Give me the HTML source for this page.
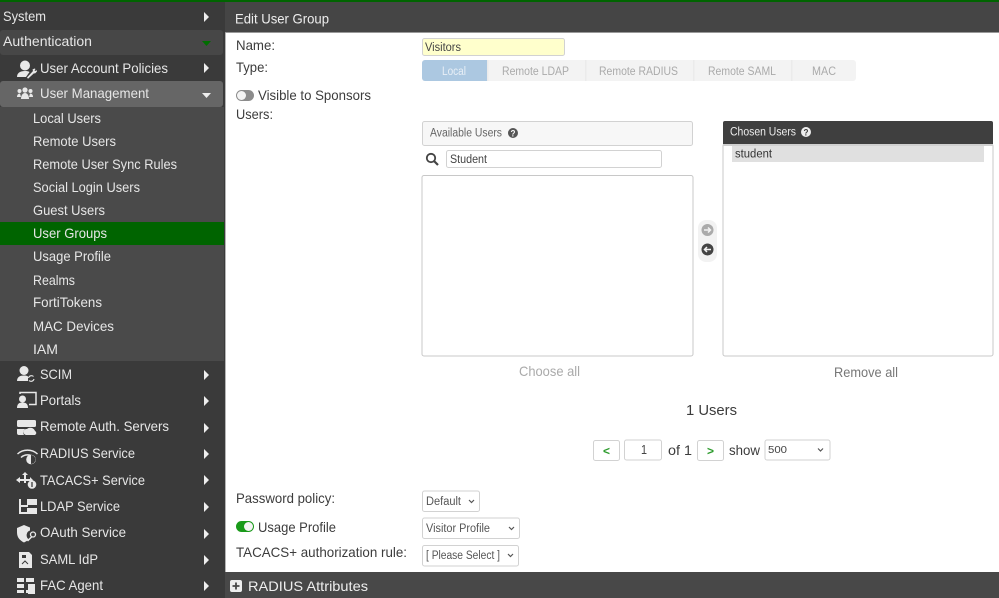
<!DOCTYPE html>
<html><head><meta charset="utf-8"><title>Edit User Group</title>
<style>
html,body{margin:0;padding:0;background:#fff;width:999px;height:598px;overflow:hidden}
svg{display:block}
text{font-family:"Liberation Sans",sans-serif;font-size:14px}
.s text{fill:#e6e6e6}
.f text{fill:#3c3c3c}
.b{fill:#fff;stroke:#d2d2d2;stroke-width:1}
.ic{fill:#e8e8e8}
.ch{fill:none;stroke:#555;stroke-width:1.2}
</style></head><body>
<svg width="999" height="598" viewBox="0 0 999 598" xmlns="http://www.w3.org/2000/svg">
<rect width="999" height="598" fill="#fff"/>
<!-- sidebar -->
<rect y="0" width="225" height="598" fill="#3a3a3a"/>
<rect y="30" width="223" height="25" rx="3" fill="#474747"/>
<rect y="81" width="223" height="26" rx="3" fill="#666"/>
<rect y="107" width="224" height="254" fill="#4a4a4a"/>
<rect y="222" width="224" height="23" fill="#006400"/>
<rect x="225" y="2" width="1" height="596" fill="#b5b5b5"/>
<g class="s">
<text x="3" y="21" textLength="43" lengthAdjust="spacingAndGlyphs">System</text>
<text x="3" y="46" textLength="89" lengthAdjust="spacingAndGlyphs">Authentication</text>
<text x="40" y="73" textLength="128" lengthAdjust="spacingAndGlyphs">User Account Policies</text>
<text x="40" y="98" textLength="109" lengthAdjust="spacingAndGlyphs">User Management</text>
<text x="33" y="123" textLength="68" lengthAdjust="spacingAndGlyphs">Local Users</text>
<text x="33" y="146" textLength="83" lengthAdjust="spacingAndGlyphs">Remote Users</text>
<text x="33" y="169" textLength="144" lengthAdjust="spacingAndGlyphs">Remote User Sync Rules</text>
<text x="33" y="192" textLength="107" lengthAdjust="spacingAndGlyphs">Social Login Users</text>
<text x="33" y="215" textLength="72" lengthAdjust="spacingAndGlyphs">Guest Users</text>
<text x="33" y="238" textLength="74" lengthAdjust="spacingAndGlyphs">User Groups</text>
<text x="33" y="261" textLength="78" lengthAdjust="spacingAndGlyphs">Usage Profile</text>
<text x="33" y="285" textLength="42" lengthAdjust="spacingAndGlyphs">Realms</text>
<text x="33" y="307" textLength="69" lengthAdjust="spacingAndGlyphs">FortiTokens</text>
<text x="33" y="331" textLength="81" lengthAdjust="spacingAndGlyphs">MAC Devices</text>
<text x="33" y="354" textLength="25" lengthAdjust="spacingAndGlyphs">IAM</text>
<text x="40" y="379" textLength="32" lengthAdjust="spacingAndGlyphs">SCIM</text>
<text x="40" y="405" textLength="41" lengthAdjust="spacingAndGlyphs">Portals</text>
<text x="40" y="431" textLength="129" lengthAdjust="spacingAndGlyphs">Remote Auth. Servers</text>
<text x="40" y="458" textLength="95" lengthAdjust="spacingAndGlyphs">RADIUS Service</text>
<text x="40" y="485" textLength="105" lengthAdjust="spacingAndGlyphs">TACACS+ Service</text>
<text x="40" y="511" textLength="80" lengthAdjust="spacingAndGlyphs">LDAP Service</text>
<text x="40" y="537" textLength="86" lengthAdjust="spacingAndGlyphs">OAuth Service</text>
<text x="40" y="564" textLength="58" lengthAdjust="spacingAndGlyphs">SAML IdP</text>
<text x="40" y="590" textLength="63" lengthAdjust="spacingAndGlyphs">FAC Agent</text>
</g>
<!-- arrows -->
<g fill="#eee">
<path d="M204 12v10l5-5z"/><path d="M204 63v10l5-5z"/>
<path d="M204 370v10l5-5z"/><path d="M204 396v10l5-5z"/><path d="M204 423v10l5-5z"/><path d="M204 449v10l5-5z"/><path d="M204 475v10l5-5z"/><path d="M204 502v10l5-5z"/><path d="M204 529v10l5-5z"/><path d="M204 555v10l5-5z"/><path d="M204 581v10l5-5z"/>
<path d="M202 93h9l-4.500 5z"/>
</g>
<path d="M202 41h9l-4.500 5z" fill="#006e00"/>
<!-- sidebar icons -->
<g class="ic">
<!-- user account policies -->
<circle cx="25" cy="65.500" r="5"/><path d="M17 77c0-4 3-6 8-6 2 0 3.500.3 4.500 1l-3.500 5z"/><path d="M27 77.500l6-6.500 -.5-1.500 2-1 1 .5-1 1.500 1 .5 1-1 .5 1.500-2 2-1-.2-6 5.500z"/>
<!-- user management -->
<circle cx="25" cy="90" r="2.600"/><circle cx="19.500" cy="91" r="2"/><circle cx="30.500" cy="91" r="2"/><path d="M21 99c0-4 2-6 4-6s4 2 4 6z"/><path d="M17 97c0-2 1-3.500 3-3.500l1 3.500z"/><path d="M33 97c0-2-1-3.500-3-3.500l-1 3.500z"/>
<!-- SCIM -->
<circle cx="24" cy="370.500" r="4.500"/><path d="M17 381c0-4 3-5.500 7-5.500 2 0 3 .3 4 1v4.500z"/><path d="M28.500 378a3 3 0 0 1 5-1.500M34 379a3 3 0 0 1-5 1.500" fill="none" stroke="#e8e8e8" stroke-width="1.100"/>
<!-- Portals -->
<circle cx="22.500" cy="399" r="3.500"/><path d="M17 408c0-4 2-5.500 5.500-5.500s5.500 1.500 5.500 5.500z"/><path d="M20 394v-1.500h16v12h-7" fill="none" stroke="#e8e8e8" stroke-width="1.500"/>
<!-- Remote auth -->
<rect x="17" y="420" width="19" height="7" rx="1.500"/><path d="M17 429h8c-2 2-2 4-1 6h-5a2 2 0 0 1-2-2z"/><path d="M26 435a3 3 0 0 1 1-6 5 5 0 0 1 8 2 2.200 2.200 0 0 1 0 4z"/>
<!-- RADIUS -->
<path d="M17.500 454a15 15 0 0 1 20 0M21 457.500a9.500 9.500 0 0 1 13 0" fill="none" stroke="#e8e8e8" stroke-width="1.500"/><circle cx="31" cy="459.500" r="4.800"/><path d="M31 455v9a4.500 4.500 0 0 0 0-9z" fill="#3a3a3a"/>
<!-- TACACS -->
<path d="M25 472l3 3h-2v4h4v-2l3 3-3 3v-2h-4v2h-2v-2h-4v2l-4-3 4-3v2h4v-4h-2z"/><circle cx="32" cy="484.500" r="4.300"/><path d="M32 482v5" stroke="#3a3a3a" stroke-width="1.300"/>
<!-- LDAP -->
<path d="M17 499h2v15h9v-2h-7v-5h7v-2h-7v-6h-2z"/><rect x="27" y="499" width="10" height="6"/><rect x="27" y="508" width="10" height="6"/>
<!-- OAuth -->
<path d="M17 528l7-3 6 2.500v3a5 5 0 0 0-1 9c-1.500 1-3 2-5 3-4-2-7-5-7-10z"/><circle cx="33" cy="534.500" r="2.500" fill="none" stroke="#e8e8e8" stroke-width="1.300"/><path d="M31.500 537l-4 4" stroke="#e8e8e8" stroke-width="1.500"/>
<!-- SAML -->
<path d="M19 552h10l3 3v13H19z"/><path d="M22 564l3-3 3 3" fill="none" stroke="#3a3a3a"/><path d="M22 555h4v3h-4z" fill="#3a3a3a"/>
<!-- FAC -->
<rect x="17" y="578" width="7" height="4"/><rect x="26" y="578" width="8" height="4"/><rect x="17" y="584" width="7" height="4"/><rect x="17" y="590" width="7" height="3"/><rect x="28" y="584" width="7" height="10"/><rect x="26" y="590" width="2" height="3"/>
</g>
<!-- top green line -->
<rect width="999" height="2" fill="#006400"/>
<!-- header -->
<rect x="225" y="2" width="774" height="30" fill="#454545"/>
<rect x="225" y="32" width="774" height="1" fill="#999"/>
<text x="235" y="23.500" textLength="94" lengthAdjust="spacingAndGlyphs" fill="#eee">Edit User Group</text>
<!-- form labels -->
<g class="f">
<text x="236" y="50" textLength="39" lengthAdjust="spacingAndGlyphs">Name:</text>
<text x="236" y="72" textLength="32" lengthAdjust="spacingAndGlyphs">Type:</text>
<text x="258" y="100" textLength="113" lengthAdjust="spacingAndGlyphs">Visible to Sponsors</text>
<text x="236" y="119" textLength="37" lengthAdjust="spacingAndGlyphs">Users:</text>
<text x="236" y="503" textLength="99" lengthAdjust="spacingAndGlyphs">Password policy:</text>
<text x="258" y="532" textLength="78" lengthAdjust="spacingAndGlyphs">Usage Profile</text>
<text x="236" y="557" textLength="171" lengthAdjust="spacingAndGlyphs">TACACS+ authorization rule:</text>
<text x="686" y="415" textLength="51" lengthAdjust="spacingAndGlyphs" style="font-size:15px">1 Users</text>
<text x="668" y="455" textLength="24" lengthAdjust="spacingAndGlyphs">of 1</text>
<text x="729" y="455" textLength="31" lengthAdjust="spacingAndGlyphs">show</text>
</g>
<!-- toggles -->
<rect x="236" y="90" width="18" height="11" rx="5.500" fill="#8c8c8c"/><circle cx="241.500" cy="95.500" r="4.500" fill="#f4f4f4"/>
<rect x="236" y="521" width="18" height="11" rx="5.500" fill="#1a9a1a"/><circle cx="248.500" cy="526.500" r="4.500" fill="#f4f4f4"/>
<!-- name input -->
<rect x="422.500" y="38.500" width="142" height="17" rx="2" fill="#ffffcc" stroke="#d2d2d2"/>
<text x="425" y="51" textLength="36" lengthAdjust="spacingAndGlyphs" style="font-size:11.500px" fill="#444">Visitors</text>
<!-- tabs -->
<rect x="422" y="60" width="434" height="21" rx="3" fill="#f3f3f3"/>
<path d="M425 60h62v21h-62a3 3 0 0 1-3-3v-15a3 3 0 0 1 3-3z" fill="#acc8e1"/>
<rect x="487" y="60" width="1.500" height="21" fill="#ebebeb"/><rect x="585" y="60" width="1.500" height="21" fill="#ebebeb"/><rect x="693" y="60" width="1.500" height="21" fill="#ebebeb"/><rect x="791" y="60" width="1.500" height="21" fill="#ebebeb"/>
<g style="fill:#aaa">
<text x="442" y="75" textLength="24" lengthAdjust="spacingAndGlyphs" style="font-size:11.500px;fill:#e8eff6">Local</text>
<text x="502" y="75" textLength="67" lengthAdjust="spacingAndGlyphs" style="font-size:11.500px">Remote LDAP</text>
<text x="599" y="75" textLength="79" lengthAdjust="spacingAndGlyphs" style="font-size:11.500px">Remote RADIUS</text>
<text x="708" y="75" textLength="68" lengthAdjust="spacingAndGlyphs" style="font-size:11.500px">Remote SAML</text>
<text x="812" y="75" textLength="24" lengthAdjust="spacingAndGlyphs" style="font-size:11.500px">MAC</text>
</g>
<!-- available -->
<rect x="422.500" y="121.500" width="270" height="24" rx="2" fill="#f7f7f7" stroke="#d2d2d2"/>
<text x="430" y="136.500" textLength="72" lengthAdjust="spacingAndGlyphs" style="font-size:11.500px" fill="#666">Available Users</text>
<circle cx="513" cy="133" r="5" fill="#555"/>
<text x="510.500" y="136.500" textLength="5" lengthAdjust="spacingAndGlyphs" style="font-size:9px;font-weight:bold" fill="#f7f7f7">?</text>
<circle cx="431" cy="158" r="4.200" fill="none" stroke="#444" stroke-width="1.800"/><path d="M434 161l4 4" stroke="#444" stroke-width="2.200"/>
<rect x="446.500" y="150.500" width="215" height="17" rx="2" class="b"/>
<text x="450" y="163" textLength="37" lengthAdjust="spacingAndGlyphs" style="font-size:11.500px" fill="#444">Student</text>
<rect x="422" y="175.500" width="271" height="180.500" rx="2" fill="#fff" stroke="#c8c8c8"/>
<!-- chosen -->
<rect x="723" y="144" width="270" height="212" rx="2" fill="#fff" stroke="#c8c8c8"/>
<path d="M725 121h266a2 2 0 0 1 2 2v21h-270v-21a2 2 0 0 1 2-2z" fill="#3f3f3f"/>
<rect x="723" y="144" width="270" height="2" fill="#d0d0d0"/>
<text x="730" y="135.500" textLength="66" lengthAdjust="spacingAndGlyphs" style="font-size:11.500px" fill="#eee">Chosen Users</text>
<circle cx="806" cy="132" r="5" fill="#eee"/>
<text x="803.500" y="135.500" textLength="5" lengthAdjust="spacingAndGlyphs" style="font-size:9px;font-weight:bold" fill="#3f3f3f">?</text>
<rect x="732" y="146" width="252" height="16" fill="#e0e0e0"/>
<text x="735" y="157.500" textLength="37" lengthAdjust="spacingAndGlyphs" style="font-size:11.500px" fill="#333">student</text>
<!-- move -->
<rect x="698" y="220" width="19" height="42" rx="8" fill="#f2f2f2"/>
<circle cx="707.500" cy="230" r="6" fill="#aaa"/><path d="M704 230h6M708 227.500l2.500 2.500-2.500 2.500" fill="none" stroke="#f2f2f2" stroke-width="1.500"/>
<circle cx="707.500" cy="249.500" r="6" fill="#444"/><path d="M711 249.500h-6M707 247l-2.500 2.500 2.500 2.500" fill="none" stroke="#f2f2f2" stroke-width="1.500"/>
<text x="519" y="376" textLength="61" lengthAdjust="spacingAndGlyphs" fill="#aaa">Choose all</text>
<text x="834" y="377" textLength="64" lengthAdjust="spacingAndGlyphs" fill="#777">Remove all</text>
<!-- pagination -->
<rect x="593.500" y="440.500" width="26" height="20" rx="2" class="b"/>
<text x="603" y="455" textLength="7" lengthAdjust="spacingAndGlyphs" style="font-size:12px;font-weight:bold" fill="#2a9a2a">&lt;</text>
<rect x="624.500" y="440" width="37" height="20" rx="2" class="b"/>
<text x="641" y="454" textLength="6" lengthAdjust="spacingAndGlyphs" style="font-size:13px" fill="#444">1</text>
<rect x="697.500" y="440.500" width="26" height="20" rx="2" class="b"/>
<text x="707" y="455" textLength="7" lengthAdjust="spacingAndGlyphs" style="font-size:12px;font-weight:bold" fill="#2a9a2a">&gt;</text>
<rect x="765" y="440" width="65" height="20" rx="2" class="b"/>
<text x="768" y="453" textLength="19" lengthAdjust="spacingAndGlyphs" style="font-size:10px" fill="#444">500</text>
<path class="ch" d="M818 448.500l2.500 2.500 2.500-2.500"/>
<!-- selects -->
<rect x="422.500" y="491" width="57" height="20.500" rx="2" class="b"/>
<text x="426" y="505" textLength="35" lengthAdjust="spacingAndGlyphs" style="font-size:11.500px" fill="#555">Default</text>
<path class="ch" d="M469 500l2.500 2.500 2.500-2.500"/>
<rect x="422.500" y="518" width="97" height="20.500" rx="2" class="b"/>
<text x="426" y="532" textLength="64" lengthAdjust="spacingAndGlyphs" style="font-size:11.500px" fill="#555">Visitor Profile</text>
<path class="ch" d="M509 527l2.500 2.500 2.500-2.500"/>
<rect x="422.500" y="545.500" width="96" height="20.500" rx="2" class="b"/>
<text x="426" y="559" textLength="74" lengthAdjust="spacingAndGlyphs" style="font-size:11.500px" fill="#555">[ Please Select ]</text>
<path class="ch" d="M508 554l2.500 2.500 2.500-2.500"/>
<!-- bottom bar -->
<rect x="225" y="572" width="774" height="26" fill="#484848"/>
<rect x="230" y="580" width="12" height="12" rx="2" fill="#eee"/>
<path d="M236 582.500v7M232.500 586h7" stroke="#484848" stroke-width="1.800"/>
<text x="248" y="591" textLength="120" lengthAdjust="spacingAndGlyphs" fill="#eee">RADIUS Attributes</text>
</svg>
</body></html>
